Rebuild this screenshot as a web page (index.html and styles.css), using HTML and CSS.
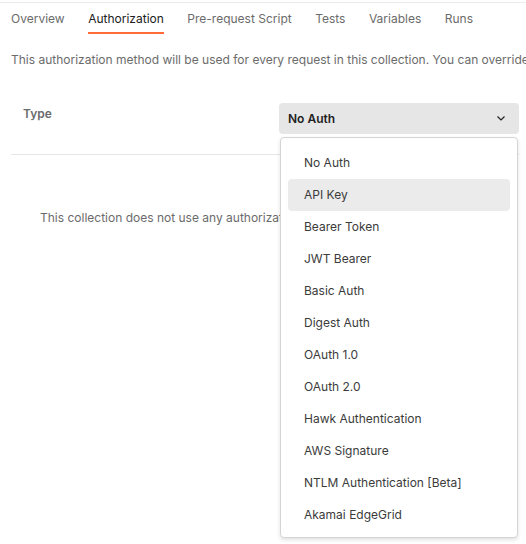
FILE: index.html
```html
<!DOCTYPE html>
<html>
<head>
  <title>Collection Authorization</title>
  <link rel="stylesheet" href="styles.css">
</head>
<body>
  <div class="page">
    <ul class="tabs">
      <li>Overview</li>
      <li class="active">Authorization</li>
      <li>Pre-request Script</li>
      <li>Tests</li>
      <li>Variables</li>
      <li>Runs</li>
    </ul>

    <p class="description">This authorization method will be used for every request in this collection. You can override this by specifying one in the request.</p>

    <div class="auth-row">
      <div class="auth-label">Type</div>
      <div class="auth-select">
        <span>No Auth</span>
        <svg class="chevron" width="8" height="5" viewBox="0 0 8 5">
          <path d="M0.5 0.5 L4 4 L7.5 0.5" fill="none" stroke="#212121" stroke-width="1.2"/>
        </svg>
      </div>
    </div>

    <div class="empty-state">This collection does not use any authorization. Learn more about authorization</div>

    <!-- open menu of the Type select -->
    <ul class="auth-menu">
      <li>No Auth</li>
      <li class="hover">API Key</li>
      <li>Bearer Token</li>
      <li>JWT Bearer</li>
      <li>Basic Auth</li>
      <li>Digest Auth</li>
      <li>OAuth 1.0</li>
      <li>OAuth 2.0</li>
      <li>Hawk Authentication</li>
      <li>AWS Signature</li>
      <li>NTLM Authentication [Beta]</li>
      <li>Akamai EdgeGrid</li>
    </ul>
  </div>
</body>
</html>
```

FILE: styles.css
```css
body {
  margin: 0;
  font-family: Inter, "Open Sans", sans-serif;
  font-size: 12px;
  color: #212121;
  background: #fff;
}

.page {
  position: relative;
  width: 526px;
  height: 544px;
  overflow: hidden;
  padding-top: 2px;
  box-sizing: border-box;
}

.page::before {
  content: "";
  display: block;
  height: 1px;
  background: #ececec;
}

.tabs {
  list-style: none;
  margin: 0;
  padding: 0 0 0 11px;
  display: flex;
  gap: 23.5px;
}

.tabs li {
  font-size: 12px;
  color: #6b6b6b;
  height: 31px;
  line-height: 31px;
  border-bottom: 2px solid transparent;
  box-sizing: border-box;
  white-space: nowrap;
}

.tabs li.active {
  color: #212121;
  border-bottom-color: #ff6c37;
}

.description {
  margin: 18px 0 0 11px;
  line-height: 16px;
  color: #6b6b6b;
  white-space: nowrap;
}

.auth-row {
  display: flex;
  align-items: flex-start;
  margin: 35px 7px 0 11px;
  padding: 0 0 20px 12px;
  border-bottom: 1px solid #e6e6e6;
}

.auth-label {
  font-weight: 600;
  color: #6b6b6b;
  padding-top: 3px;
}

.auth-select {
  margin-left: auto;
  width: 240px;
  height: 31px;
  box-sizing: border-box;
  padding: 0 14px 0 9px;
  background: #e6e6e6;
  border-radius: 4px;
  display: flex;
  align-items: center;
  justify-content: space-between;
  font-weight: 600;
}

.chevron {
  display: block;
}

.empty-state {
  margin: 55px 0 0 40px;
  color: #6b6b6b;
  white-space: nowrap;
  line-height: 16px;
}

.auth-menu {
  position: absolute;
  left: 280px;
  top: 137px;
  width: 238px;
  box-sizing: border-box;
  margin: 0;
  padding: 9px 7px 6px;
  list-style: none;
  background: #fff;
  border: 1px solid #d4d4d4;
  border-radius: 4px;
  box-shadow: 0 2px 4px rgba(0, 0, 0, 0.12);
}

.auth-menu li {
  height: 32px;
  line-height: 32px;
  padding-left: 16px;
  border-radius: 4px;
  color: #3b3b3b;
  white-space: nowrap;
}

.auth-menu li.hover {
  background: #ebebeb;
}
```
